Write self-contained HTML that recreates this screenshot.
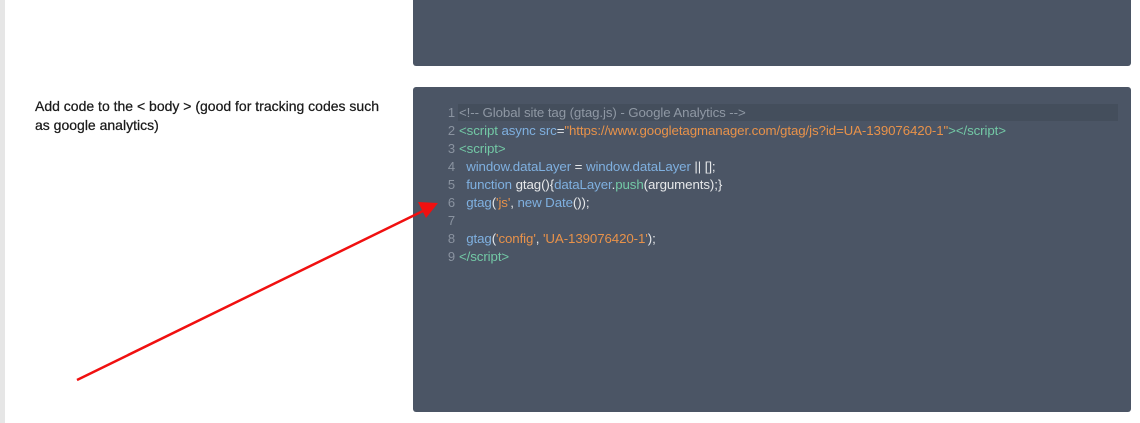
<!DOCTYPE html>
<html><head><style>
body{margin:0;width:1140px;height:423px;background:#fff;position:relative;overflow:hidden;font-family:"Liberation Sans",sans-serif}
.strip{position:absolute;left:0;top:0;width:5px;height:423px;background:#e6e6e6}
.p{position:absolute;left:413px;width:718px;background:#4b5565;border-radius:3px}
.lbl{position:absolute;left:35px;top:97px;font-size:14px;line-height:19px;color:#1a1a1a;width:348px;letter-spacing:0px;-webkit-text-stroke:0.25px #1a1a1a}
.code{position:absolute;left:413px;top:104px;font-size:13.3px;letter-spacing:-0.1px}
.l{height:18px;line-height:18px;white-space:pre;position:relative}
.n{display:inline-block;width:42px;text-align:right;color:#8a93a0;padding-right:4px;font-size:13px}
.hl{position:absolute;left:458px;top:104px;width:660px;height:17px;background:#444e5c}
.t{color:#73c9a6}.a{color:#7fb0e0}.s{color:#e8924a}.c{color:#8f98a4}.w{color:#e6e8ea}
</style></head><body>
<div class="strip"></div>
<div class="p" style="top:-4px;height:70px"></div>
<div class="p" style="top:87px;height:325px"></div>
<div class="hl"></div>
<div class="lbl">Add code to the &lt; body &gt; (good for tracking codes such<br>as google analytics)</div>
<div class="code">
<div class="l"><span class="n">1</span><span class="c">&lt;!-- Global site tag (gtag.js) - Google Analytics --&gt;</span></div>
<div class="l"><span class="n">2</span><span class="t">&lt;script</span> <span class="a">async src</span><span class="w">=</span><span class="s">"https://www.googletagmanager.com/gtag/js?id=UA-139076420-1"</span><span class="t">&gt;&lt;/script&gt;</span></div>
<div class="l"><span class="n">3</span><span class="t">&lt;script&gt;</span></div>
<div class="l"><span class="n">4</span>  <span class="a">window.dataLayer</span> <span class="w">=</span> <span class="a">window.dataLayer</span> <span class="w">|| [];</span></div>
<div class="l"><span class="n">5</span>  <span class="a">function</span> <span class="w">gtag(){</span><span class="a">dataLayer</span><span class="w">.</span><span class="t">push</span><span class="w">(arguments);}</span></div>
<div class="l"><span class="n">6</span>  <span class="a">gtag</span><span class="w">(</span><span class="s">'js'</span><span class="w">, </span><span class="a">new Date</span><span class="w">());</span></div>
<div class="l"><span class="n">7</span></div>
<div class="l"><span class="n">8</span>  <span class="a">gtag</span><span class="w">(</span><span class="s">'config'</span><span class="w">, </span><span class="s">'UA-139076420-1'</span><span class="w">);</span></div>
<div class="l"><span class="n">9</span><span class="t">&lt;/script&gt;</span></div>
</div>
<svg style="position:absolute;left:0;top:0" width="1140" height="423">
<line x1="77" y1="380" x2="425" y2="210" stroke="#f01010" stroke-width="2.5"/>
<polygon points="438,203 418,202 426,218" fill="#f01010"/>
</svg>
</body></html>
